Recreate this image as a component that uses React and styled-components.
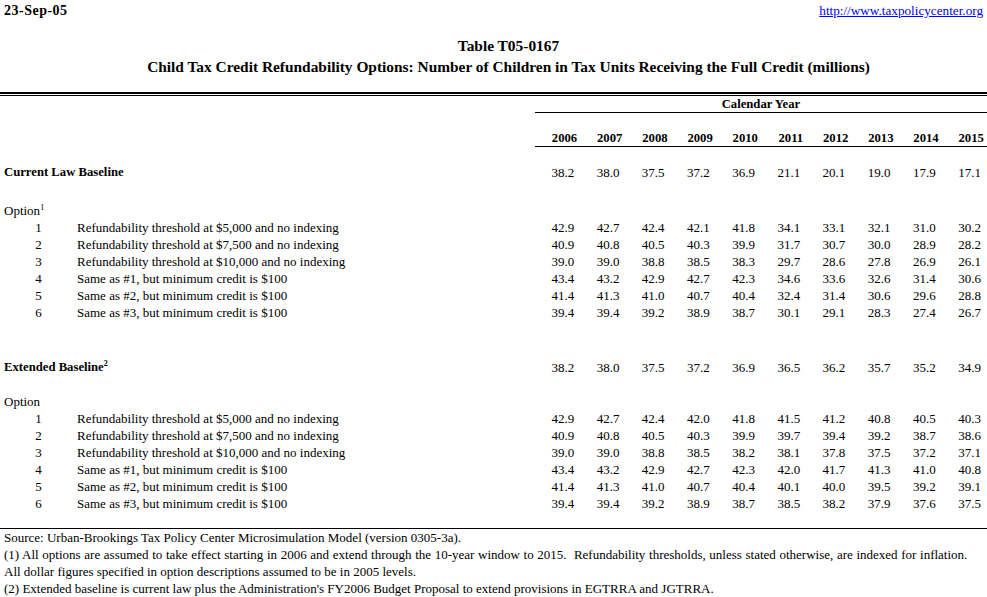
import React from "react";
import styled, { createGlobalStyle } from "styled-components";

const GlobalStyle = createGlobalStyle`
  html, body {
    margin: 0;
    padding: 0;
    background: #fff;
    overflow: hidden;
  }
  body {
    font-family: "Liberation Serif", "Times New Roman", serif;
    font-size: 13px;
    color: #000;
  }
`;

const Page = styled.div`
  width: 987px;
`;

const TopBar = styled.div`
  display: flex;
  justify-content: space-between;
  padding: 2px 4px 0;
  height: 17px;
  line-height: 17px;
`;

const DateStamp = styled.span`
  font-weight: bold;
  font-size: 14px;
  letter-spacing: 0.5px;
`;

const SiteLink = styled.a`
  color: #0000ff;
  font-size: 13.2px;
  text-decoration: underline;
`;

const TitleBlock = styled.div`
  margin-top: 16px;
  padding-left: 30px;
  text-align: center;
  font-size: 15.4px;
  font-weight: bold;
  line-height: 21px;
`;

const DoubleRule = styled.div`
  margin-top: 15px;
  height: 1px;
  border-top: 2px solid #000;
  border-bottom: 1px solid #000;
`;

const Row = styled.div`
  display: grid;
  grid-template-columns: 77px 458px repeat(10, 45.2px);
  height: ${(p) => p.$h || 17}px;
  box-sizing: border-box;
  align-items: end;
  line-height: 17px;
  white-space: nowrap;
  border-bottom: ${(p) => (p.$rule ? "1px solid #000" : "none")};
`;

const Span = styled.div`
  grid-column: 3 / -1;
  text-align: center;
  font-weight: bold;
  font-size: 12.7px;
  line-height: 16px;
  border-bottom: 1px solid #000;
`;

const Year = styled.div`
  text-align: right;
  padding-right: 3px;
  font-weight: bold;
  font-size: 12.7px;
  line-height: 15px;
  border-bottom: 1px solid #000;
`;

const Heading = styled.div`
  grid-column: 1 / 3;
  padding-left: 4px;
  font-weight: ${(p) => (p.$bold ? "bold" : "normal")};
  font-size: ${(p) => (p.$bold ? "12.7px" : "13px")};
`;

const Num = styled.div`
  text-align: center;
`;

const Desc = styled.div``;

const Value = styled.div`
  text-align: right;
  padding-right: 6px;
`;

const Sup = styled.sup`
  font-size: 8px;
  line-height: 0;
  vertical-align: 5px;
`;

const Note = styled.div`
  padding-left: 4px;
  height: 17px;
  line-height: 17px;
  font-size: 13px;
  white-space: pre;
  word-spacing: ${(p) => p.$ws || 0}px;
`;

const years = [2006, 2007, 2008, 2009, 2010, 2011, 2012, 2013, 2014, 2015];

const descs = [
  "Refundability threshold at $5,000 and no indexing",
  "Refundability threshold at $7,500 and no indexing",
  "Refundability threshold at $10,000 and no indexing",
  "Same as #1, but minimum credit is $100",
  "Same as #2, but minimum credit is $100",
  "Same as #3, but minimum credit is $100",
];

const currentBase = ["38.2", "38.0", "37.5", "37.2", "36.9", "21.1", "20.1", "19.0", "17.9", "17.1"];
const currentOpts = [
  ["42.9", "42.7", "42.4", "42.1", "41.8", "34.1", "33.1", "32.1", "31.0", "30.2"],
  ["40.9", "40.8", "40.5", "40.3", "39.9", "31.7", "30.7", "30.0", "28.9", "28.2"],
  ["39.0", "39.0", "38.8", "38.5", "38.3", "29.7", "28.6", "27.8", "26.9", "26.1"],
  ["43.4", "43.2", "42.9", "42.7", "42.3", "34.6", "33.6", "32.6", "31.4", "30.6"],
  ["41.4", "41.3", "41.0", "40.7", "40.4", "32.4", "31.4", "30.6", "29.6", "28.8"],
  ["39.4", "39.4", "39.2", "38.9", "38.7", "30.1", "29.1", "28.3", "27.4", "26.7"],
];

const extendedBase = ["38.2", "38.0", "37.5", "37.2", "36.9", "36.5", "36.2", "35.7", "35.2", "34.9"];
const extendedOpts = [
  ["42.9", "42.7", "42.4", "42.0", "41.8", "41.5", "41.2", "40.8", "40.5", "40.3"],
  ["40.9", "40.8", "40.5", "40.3", "39.9", "39.7", "39.4", "39.2", "38.7", "38.6"],
  ["39.0", "39.0", "38.8", "38.5", "38.2", "38.1", "37.8", "37.5", "37.2", "37.1"],
  ["43.4", "43.2", "42.9", "42.7", "42.3", "42.0", "41.7", "41.3", "41.0", "40.8"],
  ["41.4", "41.3", "41.0", "40.7", "40.4", "40.1", "40.0", "39.5", "39.2", "39.1"],
  ["39.4", "39.4", "39.2", "38.9", "38.7", "38.5", "38.2", "37.9", "37.6", "37.5"],
];

function Values({ data }) {
  return data.map((v, i) => <Value key={i}>{v}</Value>);
}

function OptionRows({ rows }) {
  return rows.map((vals, i) => (
    <Row key={i}>
      <Num>{i + 1}</Num>
      <Desc>{descs[i]}</Desc>
      <Values data={vals} />
    </Row>
  ));
}

export default function App() {
  return (
    <Page>
      <GlobalStyle />
      <TopBar>
        <DateStamp>23-Sep-05</DateStamp>
        <SiteLink href="#">http://www.taxpolicycenter.org</SiteLink>
      </TopBar>

      <TitleBlock>
        <div>Table T05-0167</div>
        <div>
          Child Tax Credit Refundability Options: Number of Children in Tax
          Units Receiving the Full Credit (millions)
        </div>
      </TitleBlock>

      <DoubleRule />

      <Row>
        <Span>Calendar Year</Span>
      </Row>
      <Row $h={16} />
      <Row $h={18}>
        <Heading />
        {years.map((y) => (
          <Year key={y}>{y}</Year>
        ))}
      </Row>
      <Row $h={17} />

      <Row>
        <Heading $bold>Current Law Baseline</Heading>
        <Values data={currentBase} />
      </Row>
      <Row />
      <Row $h={21}>
        <Heading>
          Option<Sup>1</Sup>
        </Heading>
      </Row>
      <OptionRows rows={currentOpts} />

      <Row />
      <Row />
      <Row $h={21}>
        <Heading $bold>
          Extended Baseline<Sup>2</Sup>
        </Heading>
        <Values data={extendedBase} />
      </Row>
      <Row />
      <Row>
        <Heading>Option</Heading>
      </Row>
      <OptionRows rows={extendedOpts} />

      <Row $h={17} $rule />
      <Note>
        Source: Urban-Brookings Tax Policy Center Microsimulation Model (version 0305-3a).
      </Note>
      <Note $ws={0.4}>
        {"(1) All options are assumed to take effect starting in 2006 and extend through the 10-year window to 2015.  Refundability thresholds, unless stated otherwise, are indexed for inflation."}
      </Note>
      <Note>All dollar figures specified in option descriptions assumed to be in 2005 levels.</Note>
      <Note>
        (2) Extended baseline is current law plus the Administration's FY2006 Budget Proposal to extend provisions in EGTRRA and JGTRRA.
      </Note>
    </Page>
  );
}
